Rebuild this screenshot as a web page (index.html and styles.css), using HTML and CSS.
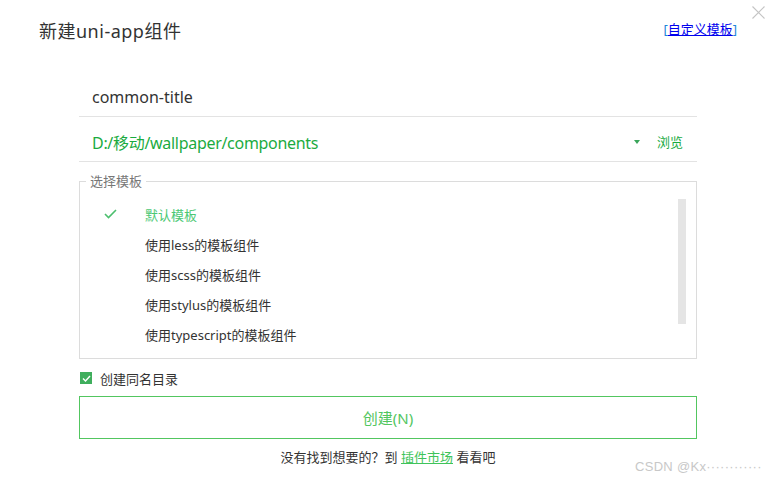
FILE: index.html
```html
<!DOCTYPE html>
<html lang="zh">
<head>
<meta charset="utf-8">
<link rel="stylesheet" href="styles.css">
</head>
<body>
<div class="dialog">
  <div class="header">
    <h1 class="title">新建uni-app组件</h1>
    <div class="custom"><span class="bracket">[</span><a href="#" class="custom-link">自定义模板</a><span class="bracket">]</span></div>
  </div>
  <span class="close" aria-label="close">
    <svg width="13" height="13" viewBox="0 0 13 13"><path d="M0.5 0.5 L12.5 12.5 M12.5 0.5 L0.5 12.5" stroke="#c4c4c4" stroke-width="1.1" fill="none"/></svg>
  </span>

  <div class="form">
    <div class="row row-name"><span class="name">common-title</span></div>
    <div class="row row-path">
      <span class="path">D:/移动/wallpaper/components</span>
      <span class="caret"></span>
      <span class="browse">浏览</span>
    </div>

    <fieldset class="templates">
      <legend class="legend">选择模板</legend>
      <div class="tpl-body">
        <ul class="tpl-list">
          <li class="tpl active">
            <span class="check"><svg width="13" height="10" viewBox="0 0 13 10"><path d="M1 5 L4.5 8.5 L12 1" stroke="#4cbf6e" stroke-width="1.6" fill="none"/></svg></span>
            <span class="tpl-name">默认模板</span>
          </li>
          <li class="tpl"><span class="check"></span><span class="tpl-name">使用less的模板组件</span></li>
          <li class="tpl"><span class="check"></span><span class="tpl-name">使用scss的模板组件</span></li>
          <li class="tpl"><span class="check"></span><span class="tpl-name">使用stylus的模板组件</span></li>
          <li class="tpl"><span class="check"></span><span class="tpl-name">使用typescript的模板组件</span></li>
        </ul>
        <div class="scrollbar"></div>
      </div>
    </fieldset>

    <label class="same-dir">
      <span class="cb"><svg width="9" height="7" viewBox="0 0 9 7"><path d="M1 3.5 L3.5 6 L8 1" stroke="#fff" stroke-width="1.4" fill="none"/></svg></span>
      <span class="cb-label">创建同名目录</span>
    </label>

    <button class="create">创建(N)</button>

    <p class="footer">没有找到想要的？到 <a href="#" class="market">插件市场</a> 看看吧</p>
  </div>
  <span class="watermark">CSDN @Kx············</span>
</div>
</body>
</html>
```

FILE: styles.css
```css
* { box-sizing: border-box; }
html, body {
  margin: 0;
  padding: 0;
  background: #fff;
}
body {
  font-family: "Noto Sans", "Noto Sans CJK SC", sans-serif;
  color: #333;
  width: 769px;
  height: 481px;
  overflow: hidden;
}
.dialog {
  position: relative;
  width: 769px;
  height: 481px;
}
.header {
  display: flex;
  justify-content: space-between;
  align-items: center;
  padding: 17px 32px 0 39px;
  height: 44px;
}
.title {
  margin: 0;
  font-weight: normal;
  font-size: 18px;
  line-height: 24px;
  color: #333;
  letter-spacing: 0.5px;
}
.custom {
  font-size: 13px;
  line-height: 18px;
  margin-top: -4px;
}
.bracket { color: #1c86d8; }
.custom-link {
  color: #0000ee;
  text-decoration: underline;
}
.close {
  position: absolute;
  top: 6px;
  right: 4px;
  width: 13px;
  height: 13px;
  display: block;
  line-height: 0;
}
.form {
  margin: 36px 72px 0 79px;
}
.row {
  display: flex;
  align-items: center;
  border-bottom: 1px solid #e3e3e3;
  padding-left: 13px;
}
.row-name {
  height: 37px;
  padding-bottom: 2px;
}
.name {
  font-size: 16px;
  color: #333;
}
.row-path {
  height: 45px;
  padding-top: 5px;
  padding-right: 14px;
}
.path {
  font-size: 16px;
  color: #1bab3f;
  flex: 1;
  letter-spacing: -0.3px;
}
.caret {
  width: 0;
  height: 0;
  border-left: 3px solid transparent;
  border-right: 3px solid transparent;
  border-top: 4px solid #3aa55a;
  margin-right: 17px;
}
.browse {
  font-size: 13px;
  color: #1bab3f;
}
.templates {
  margin: 10px 0 0 0;
  padding: 0;
  border: 1px solid #dcdcdc;
  min-width: 0;
}
.legend {
  margin-left: 6px;
  padding: 0 4px;
  font-size: 13px;
  line-height: 18px;
  color: #777;
}
.tpl-body {
  display: flex;
  justify-content: space-between;
  padding: 8px 10px 7px 0;
  height: 168px;
}
.tpl-list {
  list-style: none;
  margin: 1px 0 0 0;
  padding: 0;
}
.tpl {
  display: flex;
  align-items: center;
  height: 30px;
  font-size: 13px;
  color: #333;
}
.check {
  width: 65px;
  padding-left: 24px;
  line-height: 0;
}
.active .tpl-name { color: #4cc874; }
.scrollbar {
  width: 8px;
  height: 125px;
  margin-top: 1px;
  background: #e5e5e5;
}
.same-dir {
  display: flex;
  align-items: center;
  height: 22px;
  margin-top: 8px;
  padding-left: 1px;
}
.cb {
  width: 12px;
  height: 12px;
  background: #3fae5d;
  display: flex;
  align-items: center;
  justify-content: center;
  margin-right: 8px;
}
.cb-label {
  font-size: 13px;
  color: #333;
}
.create {
  display: block;
  width: 100%;
  height: 43px;
  margin-top: 7px;
  background: #fff;
  border: 1px solid #52c660;
  color: #52c660;
  font-family: inherit;
  font-size: 15px;
  padding: 0;
}
.footer {
  margin: 9px 0 0 0;
  text-align: center;
  font-size: 13px;
  line-height: 18px;
  color: #333;
}
.market {
  color: #3ec45a;
  text-decoration: underline;
}
.watermark {
  position: absolute;
  left: 635px;
  top: 459px;
  font-size: 13px;
  color: #c8c8c8;
  font-family: "Liberation Sans", sans-serif;
  white-space: nowrap;
  letter-spacing: 0.3px;
}
```
